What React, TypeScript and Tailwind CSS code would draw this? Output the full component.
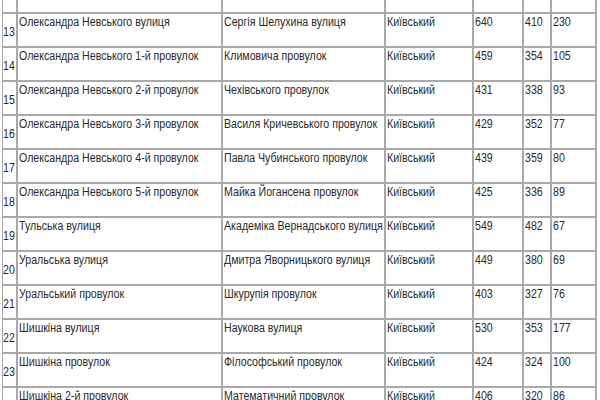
const rows: [string, string, string, string, number, number, number][] = [
  ["13", "Олександра Невського вулиця", "Сергія Шелухина вулиця", "Київський", 640, 410, 230],
  ["14", "Олександра Невського 1-й провулок", "Климовича провулок", "Київський", 459, 354, 105],
  ["15", "Олександра Невського 2-й провулок", "Чехівського провулок", "Київський", 431, 338, 93],
  ["16", "Олександра Невського 3-й провулок", "Василя Кричевського провулок", "Київський", 429, 352, 77],
  ["17", "Олександра Невського 4-й провулок", "Павла Чубинського провулок", "Київський", 439, 359, 80],
  ["18", "Олександра Невського 5-й провулок", "Майка Йогансена провулок", "Київський", 425, 336, 89],
  ["19", "Тульська вулиця", "Академіка Вернадського вулиця", "Київський", 549, 482, 67],
  ["20", "Уральська вулиця", "Дмитра Яворницького вулиця", "Київський", 449, 380, 69],
  ["21", "Уральський провулок", "Шкурупія провулок", "Київський", 403, 327, 76],
  ["22", "Шишкіна вулиця", "Наукова вулиця", "Київський", 530, 353, 177],
  ["23", "Шишкіна провулок", "Філософський провулок", "Київський", 424, 324, 100],
  ["24", "Шишкіна 2-й провулок", "Математичний провулок", "Київський", 406, 320, 86],
];

const cell = "border border-[#a9a9a9] px-px pt-px align-top whitespace-nowrap overflow-hidden";

// the source font is rendered narrower than Arial, so squeeze the text a little
function T({ children }: { children: React.ReactNode }) {
  return <span className="inline-block origin-left scale-x-[0.85]">{children}</span>;
}

export default function App() {
  return (
    <div className="h-[400px] w-[600px] overflow-hidden bg-white pl-[2px] font-['Liberation_Sans',Arial,sans-serif] text-[12.5px] leading-[15px] text-[#2a2a2a]">
      <table className="w-[594px] table-fixed border-separate border-spacing-0 border-r border-[#a9a9a9]">
        <colgroup>
          <col className="w-[15px]" />
          <col className="w-[205px]" />
          <col className="w-[163px]" />
          <col className="w-[88px]" />
          <col className="w-[50px]" />
          <col className="w-[28px]" />
          <col className="w-[45px]" />
        </colgroup>
        <tbody>
          <tr className="h-[13px]">
            {Array.from({ length: 7 }).map((_, i) => (
              <td key={i} className="border-x border-b border-[#a9a9a9]" />
            ))}
          </tr>
          {rows.map((r) => (
            <tr key={r[0]} className="h-[34px]">
              <td className="border border-[#a9a9a9] pt-[5px] align-middle whitespace-nowrap overflow-visible">
                <T>{r[0]}</T>
              </td>
              <td className={cell}><T>{r[1]}</T></td>
              <td className={cell}><T>{r[2]}</T></td>
              <td className={cell}><T>{r[3]}</T></td>
              <td className={cell}><T>{r[4]}</T></td>
              <td className={cell}><T>{r[5]}</T></td>
              <td className={cell}><T>{r[6]}</T></td>
            </tr>
          ))}
        </tbody>
      </table>
    </div>
  );
}
